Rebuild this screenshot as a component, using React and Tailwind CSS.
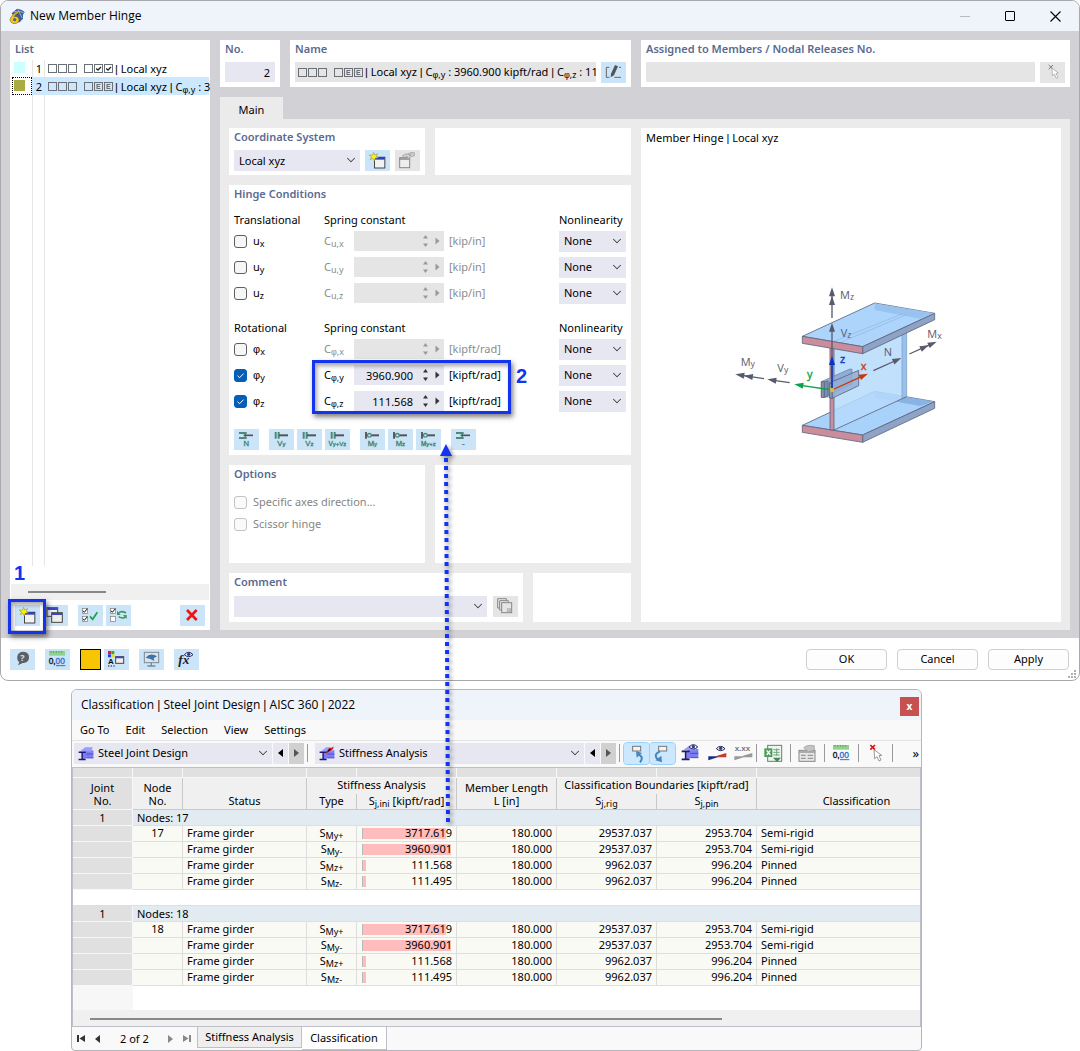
import { ChevronDown } from 'lucide-react';

// ---------- small helpers ----------

const Sub = ({ children }) => (
  <span className="relative top-[2px] text-[9px] leading-none">{children}</span>
);

const Phi = () => <span className="font-['Liberation_Sans',sans-serif]">φ</span>;

const Bar = () => <span className="font-['Liberation_Sans',sans-serif]">|</span>;

// one little square of the hinge code, e.g. □ ☑ E
const CodeBox = ({ mark }) => (
  <svg className="w-[9px] h-[9px] shrink-0" viewBox="0 0 9 9" fill="none" stroke="currentColor">
    <rect x="0.5" y="0.5" width="8" height="8" strokeWidth="1" />
    {mark === 'v' && <path d="M2.2 4.4 L4 6 L7 3" stroke="#222" strokeWidth="1.3" />}
    {mark === 'E' && <path d="M6.4 2.5 H3 V6.5 H6.4 M3 4.5 H6" strokeWidth="1.1" />}
  </svg>
);

const HingeCode = ({ marks }) => (
  <span className="flex gap-px shrink-0 items-center text-[#6b6f76]">
    <CodeBox />
    <CodeBox />
    <CodeBox />
    <span className="w-[5px]" />
    {marks.map((m, i) => (
      <CodeBox key={i} mark={m} />
    ))}
  </span>
);

const Panel = ({ title, className = '', children }) => (
  <section className={`bg-white px-[5px] ${className}`}>
    {title && <h2 className="font-semibold text-[#5a6a91] leading-[18px] h-[22px]">{title}</h2>}
    {children}
  </section>
);

const IconButton = ({ label, disabled, children }) => (
  <button
    type="button"
    aria-label={label}
    disabled={disabled}
    className={`w-[25px] h-[21px] shrink-0 ${disabled ? 'bg-[#e5e5e5]' : 'bg-[#cce4f7]'}`}
  >
    <svg className="w-full h-full" viewBox="0 0 75 63" fill="none">
      {children}
    </svg>
  </button>
);

const Dropdown = ({ label, value, className = '', selectClass = 'pl-[5px]' }) => (
  <div className={`relative h-[21px] ${className}`}>
    <select
      aria-label={label}
      defaultValue={value}
      className={`appearance-none w-full h-full bg-[#e7e7f2] pr-5 outline-none ${selectClass}`}
    >
      <option>{value}</option>
    </select>
    <ChevronDown size={14} strokeWidth={1.8} className="absolute right-[2px] top-[3px] text-[#444] pointer-events-none" />
  </div>
);

const CheckBox = ({ id, checked, disabled }) => (
  <span className="relative w-[13px] h-[13px] shrink-0">
    <input
      id={id}
      type="checkbox"
      defaultChecked={checked}
      disabled={disabled}
      className="appearance-none block w-[13px] h-[13px] rounded-[3px] border border-[#5f5f5f] bg-[#f6f6f6] checked:bg-[#005fb8] checked:border-[#005fb8] disabled:border-[#c3c3c3] disabled:bg-[#fafafa]"
    />
    {checked && (
      <svg className="absolute inset-0 pointer-events-none" viewBox="0 0 13 13" fill="none">
        <path d="M3.5 6.7 L5.6 8.7 L9.6 4.6" stroke="#fff" strokeWidth="1" />
      </svg>
    )}
  </span>
);

// ---------- icon drawings (75 x 63 units = one button) ----------

const Star = () => (
  <path d="M26 7 L29 15 L38 11 L33 19 L40 24 L31 24 L28 33 L24 25 L15 29 L20 21 L12 15 L22 16 Z" fill="#fbf305" stroke="#8a8a3c" strokeWidth="1.5" />
);

const NewWindowIcon = () => (
  <>
    <rect x="28.500" y="23" width="31" height="31" fill="#f2f2f2" stroke="#444" strokeWidth="3" />
    <rect x="30" y="21" width="29" height="8" fill="#2f3fd0" />
    <path d="M27 21.500 H61" stroke="#444" strokeWidth="2" />
    <Star />
  </>
);

const CopyWindowIcon = () => (
  <>
    <rect x="12" y="8" width="32" height="26" fill="#f2f2f2" stroke="#444" strokeWidth="3" />
    <rect x="13" y="9" width="30" height="6" fill="#3947c8" />
    <rect x="26" y="23" width="32" height="29" fill="#eee" stroke="#444" strokeWidth="3" />
    <rect x="27" y="24" width="30" height="6" fill="#3947c8" />
  </>
);

const TickSquare = ({ y, on }) => (
  <g>
    <rect x="13" y={y} width="15" height="15" fill="#fff" stroke="#777" strokeWidth="2" />
    {on && <path d={`M15 ${y + 7} l4 5 l9 -11`} stroke="#111" strokeWidth="3" />}
  </g>
);

const EditIcon = () => (
  <>
    <path d="M25 16 H16 V46 H25" stroke="#666" strokeWidth="3" />
    <path d="M40 46 H60 M54 16 H60" stroke="#666" strokeWidth="3" />
    <path d="M29 46 L30 35 L42 9 L51 13 L39 40 Z" fill="#555" />
  </>
);

const HandWindowIcon = () => (
  <>
    <rect x="14" y="23" width="30" height="30" fill="#eee" stroke="#888" strokeWidth="3" />
    <path d="M14 27 H44" stroke="#888" strokeWidth="4" />
    <path d="M22 18 Q30 9 38 12 Q48 5 58 8 V18 Q52 18 46 21 L40 27 L36 25 L38 20 L28 22 Z" fill="#cfcfcf" stroke="#999" strokeWidth="2" />
    <path d="M38 12 L48 16 M42 18 L50 12" stroke="#999" strokeWidth="2" />
  </>
);

const PickIcon = () => (
  <>
    <path d="M26 9 L39 22 M39 9 L26 22" stroke="#777" strokeWidth="3" />
    <path d="M36 18 L37 41 L43 36 L49 49 L54 46 L48 34 L55 33 Z" fill="#fff" stroke="#999" strokeWidth="2" />
  </>
);

// hinge presets
const PresetIcon = ({ kind, text }) => (
  <>
    {kind === 'n' && (
      <>
        <path d="M15 12 H38 M15 27 H38" stroke="#4c8a7c" strokeWidth="6" />
        <path d="M34 9 V29" stroke="#4c8a7c" strokeWidth="4" />
        <path d="M29 19 H57" stroke="#555" strokeWidth="5" />
      </>
    )}
    {kind === 'v' && (
      <>
        <path d="M20 9 V29 M29 9 V29" stroke="#4c8a7c" strokeWidth="6" />
        <path d="M30 19 H57" stroke="#555" strokeWidth="6" />
      </>
    )}
    {kind === 'm' && (
      <>
        <path d="M18 9 V29" stroke="#444" strokeWidth="5" />
        <path d="M18 19 H57" stroke="#555" strokeWidth="6" />
        <circle cx="28" cy="19" r="5.500" fill="#cce4f7" stroke="#4c8a7c" strokeWidth="4" />
      </>
    )}
    <text x="37" y="50" textAnchor="middle" fontFamily="Liberation Sans" fontSize={text.length > 2 ? 19 : 23} fill="#3f8576" stroke="#3f8576" strokeWidth="1">
      {text[0]}
      <tspan fontSize="18" dy="2">{text.slice(1)}</tspan>
    </text>
  </>
);

const UnitsIcon = () => (
  <>
    <rect x="12" y="6" width="48" height="14" fill="#8fd28b" />
    <path d="M18 6 v5 M26 6 v5 M34 6 v5 M42 6 v5 M50 6 v5" stroke="#2c8c3c" strokeWidth="2" />
    <text x="11" y="45" fontFamily="Liberation Sans" fontSize="25" fill="#111" stroke="#111" strokeWidth="1">
      0,<tspan fill="#2c6fd0" stroke="#2c6fd0">00</tspan>
    </text>
    <path d="M33 50 H61" stroke="#2c6fd0" strokeWidth="3" />
  </>
);

const Eye = ({ x, y }) => (
  <g transform={`translate(${x} ${y})`}>
    <path d="M0 8 Q13 -6 26 8 Q13 20 0 8 Z" fill="#fff" stroke="#1b2352" strokeWidth="3" />
    <circle cx="13" cy="7" r="5" fill="#27408f" />
  </g>
);

const BeamMini = ({ children }) => (
  <>
    <path d="M22 26 L34 18 H58 V44 H34 L22 50 Z" fill="#7d7df2" />
    <path d="M30 8 H56 L50 22 H12 Z" fill="#9c9cff" />
    <path d="M34 31 H58 M34 44 H58" stroke="#4a4ad0" strokeWidth="3" />
    <path d="M8 25 H32 M20 25 V48 M8 49 H32" stroke="#1a1a75" strokeWidth="5" />
    {children}
  </>
);

// ---------- dialog parts ----------

const Annotation = ({ className }) => (
  <div className={`absolute border-[3px] border-[#1433ee] shadow-[2px_3px_5px_rgba(0,0,0,0.5),inset_2px_3px_4px_rgba(0,0,0,0.35)] pointer-events-none ${className}`} />
);

const Spinner = () => (
  <svg className="absolute right-0 top-0 w-[23px] h-5" viewBox="0 0 23 20" fill="currentColor">
    <path d="M4.500 4 L7 7.500 H2 Z M4.500 16 L7 12.500 H2 Z M14.500 6.500 L18.500 10 L14.500 13.500 Z" />
  </svg>
);

const HingeRow = ({ base, axis, value, unit }) => {
  const on = Boolean(value);
  const id = `${base}-${axis}`;
  const symbol = base === 'φ' ? <Phi /> : base;
  return (
    <div className="flex items-center h-[26px]">
      <div className="flex items-center w-[90px] gap-[6px]">
        <CheckBox id={id} checked={on} />
        <label htmlFor={id}>
          {symbol}<Sub>{axis}</Sub>
        </label>
      </div>
      <label htmlFor={`${id}-c`} className={`w-[30px] ${on ? '' : 'text-[#8b8b8b]'}`}>
        C<Sub>{symbol},{axis}</Sub>
      </label>
      <div className={`relative w-[90px] h-5 ${on ? 'bg-[#e7e7f2] text-[#333]' : 'bg-[#e5e5e5] text-[#999]'}`}>
        <input
          id={`${id}-c`}
          defaultValue={value}
          disabled={!on}
          className="w-full h-full bg-transparent text-right pr-[31px] text-black outline-none"
        />
        <Spinner />
      </div>
      <span className={`ml-[5px] flex-1 ${on ? '' : 'text-[#8b8b8b]'}`}>{unit}</span>
      <Dropdown label={`Nonlinearity ${id}`} value="None" className="w-[67px]" />
    </div>
  );
};

const HingeHeader = ({ title }) => (
  <div className="flex items-center h-4">
    <span className="w-[90px]">{title}</span>
    <span className="flex-1">Spring constant</span>
    <span className="w-[67px]">Nonlinearity</span>
  </div>
);

const Arrow = ({ x1, y1, x2, y2, color = '#5a5a6e', double }) => {
  const len = Math.hypot(x2 - x1, y2 - y1);
  const deg = (Math.atan2(y2 - y1, x2 - x1) * 180) / Math.PI;
  return (
    <g transform={`translate(${x1} ${y1}) rotate(${deg})`} fill={color}>
      <path d={`M0 0 H${len - 20}`} stroke={color} strokeWidth="4" />
      <path d={`M${len} 0 l-27 -9 v18 Z`} />
      {double && <path d={`M${len - 26} 0 l-27 -9 v18 Z`} />}
    </g>
  );
};

const BeamDrawing = () => (
  <svg className="w-60 h-[180px]" viewBox="0 0 720 540" fill="none" fontFamily="Open Sans, sans-serif" fontSize="33">
    <g stroke="#5d6580" strokeWidth="2.500" strokeLinejoin="round">
      {/* bottom flange */}
      <path d="M247 436 L464 334 L644 365 L428 465 Z" fill="#a9d2fb" />
      <path d="M464 334 V353 L600 378 L644 365 Z" fill="#88b3e2" stroke="none" />
      <path d="M428 465 L644 365 V385 L428 487 Z" fill="#8ea3c5" />
      <path d="M247 436 L428 465 V487 L247 457 Z" fill="#c98d9c" />
      {/* web */}
      <path d="M342 208 L546 106 L560 102 V350 L342 449 Z" fill="#b6dafb" fillOpacity="0.850" stroke="none" />
      <path d="M546 110 L560 104 V350 L546 356 Z" fill="#94c1ee" stroke="#8aa4c8" />
      <path d="M342 450 L560 350" />
      <path d="M330 203 H342 V450 H330 Z" fill="#c98d9c" />
      {/* top flange */}
      <path d="M247 169 L464 69 L644 100 L428 200 Z" fill="#add5fc" />
      <path d="M464 70 V90 L600 116 L644 100 Z" fill="#98c3ee" stroke="none" />
      <path d="M342 184 L546 102 M360 188 L560 104" stroke="#8cb5df" strokeWidth="2" />
      <path d="M428 200 L644 100 V119 L428 221 Z" fill="#8ea3c5" />
      <path d="M247 169 L428 200 V221 L247 190 Z" fill="#c98d9c" />
      {/* hinge plates */}
      <path d="M304 305 L390 267 L396 268 V312 L313 352 L304 352 Z" fill="#7d9cc8" fillOpacity="0.750" stroke="#7486a6" />
      <path d="M304 305 H313 V352 H304 Z" fill="#8c93a8" />
      <path d="M313 306 L324 302 V350 L313 352 Z" fill="#7890b8" />
      <path d="M328 309 L416 271 V317 L336 355 L328 353 Z" fill="#93aed4" fillOpacity="0.850" />
      <path d="M328 309 L337 311 V355 L328 353 Z" fill="#8c93a8" />
    </g>
    <Arrow x1={336} y1={114} x2={336} y2={22} double />
    <Arrow x1={336} y1={330} x2={336} y2={128} />
    <Arrow x1={336} y1={330} x2={336} y2={228} color="#0433c8" />
    <Arrow x1={336} y1={330} x2={223} y2={313} color="#0aa04c" />
    <Arrow x1={336} y1={330} x2={444} y2={281} color="#c8370a" />
    <Arrow x1={460} y1={272} x2={544} y2={234} />
    <Arrow x1={568} y1={222} x2={650} y2={185} double />
    <Arrow x1={209} y1={308} x2={142} y2={298} />
    <Arrow x1={132} y1={296} x2={46} y2={283} double />
    <circle cx="336" cy="330" r="7" fill="#c6bf4e" />
    <g fill="#5a5a6e">
      <text x="360" y="58">M<tspan fontSize="26" dy="3">z</tspan></text>
      <text x="362" y="171">V<tspan fontSize="26" dy="3">z</tspan></text>
      <text x="622" y="175">M<tspan fontSize="26" dy="3">x</tspan></text>
      <text x="491" y="228">N</text>
      <text x="62" y="257">M<tspan fontSize="26" dy="3">y</tspan></text>
      <text x="172" y="277">V<tspan fontSize="26" dy="3">y</tspan></text>
    </g>
    <text x="360" y="248" fill="#0433c8" stroke="#0433c8">z</text>
    <text x="422" y="269" fill="#c8370a" stroke="#c8370a">x</text>
    <text x="261" y="293" fill="#0aa04c" stroke="#0aa04c">y</text>
  </svg>
);

const ListPanel = () => (
  <section className="relative bg-white w-[200px] shrink-0 flex flex-col">
    <h2 className="font-semibold text-[#5a6a91] leading-[18px] h-5 px-[5px]">List</h2>
    <div className="flex-1 flex flex-col pl-[2px] pr-px bg-[linear-gradient(#e6e6e6,#e6e6e6),linear-gradient(#e6e6e6,#e6e6e6)] bg-[length:1px_100%] bg-no-repeat bg-[position:22px_0,34px_0]">
      <div className="flex items-center h-[17px]">
        <span className="w-5 shrink-0 pl-[2px] h-full pt-[2px]"><span className="block size-[11px] bg-[#ccffff]" /></span>
        <span className="w-[10px] shrink-0 text-right">1</span>
        <span className="flex items-center gap-[2px] ml-[6px] whitespace-nowrap">
          <HingeCode marks={['', 'v', 'v']} />
          <span><Bar /> Local xyz</span>
        </span>
      </div>
      <div className="flex items-center h-[18px] bg-[#cce8ff]">
        <span className="w-5 shrink-0 pl-px pt-[2px] h-full bg-white border border-dotted border-black"><span className="block size-[11px] bg-[#a9ac40]" /></span>
        <span className="w-[10px] shrink-0 text-right pt-px">2</span>
        <span className="flex items-center gap-[2px] ml-[6px] pt-px whitespace-nowrap">
          <HingeCode marks={['', 'E', 'E']} />
          <span><Bar /> Local xyz <Bar /> C<Sub><Phi />,y</Sub> : 3</span>
        </span>
      </div>
    </div>
    <span className="pl-1 h-[18px] text-xl leading-[14px] font-bold text-[#1433ee] font-['Liberation_Sans',sans-serif]">1</span>
    <div className="h-4 mx-px bg-[#f0f0f0] pt-[7px] pl-[17px]">
      <div className="w-[78px] h-[2px] bg-[#888]" />
    </div>
    <div className="flex h-[30px] pt-[5px] px-[5px]">
      <IconButton label="New"><NewWindowIcon /></IconButton>
      <span className="w-[3px]" />
      <IconButton label="Copy"><CopyWindowIcon /></IconButton>
      <span className="w-[10px]" />
      <IconButton label="Select all">
        <TickSquare y={10} on />
        <TickSquare y={34} on />
        <path d="M36 34 L44 43 L58 22" stroke="#16a34a" strokeWidth="5" />
      </IconButton>
      <span className="w-[3px]" />
      <IconButton label="Invert selection">
        <TickSquare y={10} on />
        <TickSquare y={34} />
        <path d="M38 24 Q46 16 60 24 M60 35 Q50 43 38 35" stroke="#3a9a5c" strokeWidth="5" />
        <path d="M33 17 V30 H44 Z M62 42 V30 H51 Z" fill="#3a9a5c" />
      </IconButton>
      <span className="flex-1" />
      <IconButton label="Delete">
        <path d="M21 15 L50 45 M50 15 L21 45" stroke="#f01414" strokeWidth="8" />
      </IconButton>
    </div>
    <Annotation className="left-[-2px] bottom-[-4px] w-[38px] h-[35px]" />
  </section>
);

const presets = [
  ['n', 'N', ''],
  ['v', 'Vy', 'ml-[10px]'],
  ['v', 'Vz', 'ml-[3px]'],
  ['v', 'Vy+Vz', 'ml-[3px]'],
  ['m', 'My', 'ml-[10px]'],
  ['m', 'Mz', 'ml-[3px]'],
  ['m', 'My+z', 'ml-[3px]'],
  ['n', '-', 'ml-[10px]'],
];

const MainTab = () => (
  <div className="flex-1 flex gap-[10px] bg-[#ebebeb] p-[9px] pb-2">
    <div className="w-[402px] shrink-0 flex flex-col gap-[10px]">
      <div className="grid grid-cols-2 gap-[10px]">
        <Panel title="Coordinate System" className="h-[47px]">
          <div className="flex gap-[5px]">
            <Dropdown label="Coordinate System" value="Local xyz" className="w-[126px]" />
            <IconButton label="New coordinate system"><NewWindowIcon /></IconButton>
            <IconButton label="Edit coordinate system" disabled><HandWindowIcon /></IconButton>
          </div>
        </Panel>
        <Panel />
      </div>

      <Panel title="Hinge Conditions" className="pb-[5px]">
        <div className="mt-[5px]">
          <HingeHeader title="Translational" />
          <HingeRow base="u" axis="x" unit="[kip/in]" />
          <HingeRow base="u" axis="y" unit="[kip/in]" />
          <HingeRow base="u" axis="z" unit="[kip/in]" />
        </div>
        <div className="mt-[14px]">
          <HingeHeader title="Rotational" />
          <HingeRow base="φ" axis="x" unit="[kipft/rad]" />
          <div className="relative">
            <HingeRow base="φ" axis="y" value="3960.900" unit="[kipft/rad]" />
            <HingeRow base="φ" axis="z" value="111.568" unit="[kipft/rad]" />
            <Annotation className="left-[78px] top-[-2px] w-[199px] h-[54px]" />
            <span className="absolute left-[282px] top-1 text-xl leading-5 font-bold text-[#1433ee] font-['Liberation_Sans',sans-serif]">2</span>
          </div>
        </div>
        <div className="flex mt-[15px]">
          {presets.map(([kind, text, gap]) => (
            <span key={text} className={`flex ${gap}`}>
              <IconButton label={text}><PresetIcon kind={kind} text={text} /></IconButton>
            </span>
          ))}
        </div>
      </Panel>

      <div className="grid grid-cols-2 gap-[10px]">
        <Panel title="Options" className="h-[98px]">
          <div className="mt-1 text-[#858585]">
            <div className="flex items-center gap-[6px] h-[22px]">
              <CheckBox id="axes" disabled />
              <label htmlFor="axes">Specific axes direction...</label>
            </div>
            <div className="flex items-center gap-[6px] h-[22px]">
              <CheckBox id="scissor" disabled />
              <label htmlFor="scissor">Scissor hinge</label>
            </div>
          </div>
        </Panel>
        <Panel />
      </div>

      <div className="flex gap-[10px] flex-1">
        <Panel title="Comment" className="w-[294px] min-h-[49px]">
          <div className="flex gap-[6px] pt-px">
            <Dropdown label="Comment" value="" className="flex-1" />
            <IconButton label="Comment library" disabled>
              <path d="M19 36 H14 V8 H40 V12 M25 42 H20 V14 H46 V18" stroke="#888" strokeWidth="3" />
              <rect x="26" y="20" width="30" height="30" stroke="#888" strokeWidth="3" />
              <path d="M43 38 H53 V47 H43 Z M45 42 L48 45 L52 39" stroke="#999" strokeWidth="2" />
            </IconButton>
          </div>
        </Panel>
        <Panel className="flex-1" />
      </div>
    </div>

    <section className="bg-white flex-1 flex flex-col px-[5px]">
      <h2 className="leading-5">Member Hinge <Bar /> Local xyz</h2>
      <div className="flex-1 flex items-center justify-center pr-[22px] pb-[30px]">
        <BeamDrawing />
      </div>
    </section>
  </div>
);

const HingeDialog = () => (
  <div className="border border-[#a9a9ad] rounded-lg overflow-hidden bg-white">
    <header className="flex items-center h-[30px] bg-[#eff3fa] pl-2 pr-[18px]">
      <svg className="w-4 h-4" viewBox="0 0 48 48">
        <path d="M8 16 L24 2 Q40 4 47 12 L42 20 V32 L30 44 Z" fill="#3d5d96" />
        <path d="M14 12 Q30 6 44 14 M26 4 L40 30" stroke="#9cb6dd" strokeWidth="3" fill="none" />
        <path d="M25 10 Q6 22 3 34 Q4 46 17 47 Q31 45 30 33 Q27 23 15 26 Q19 18 29 14 Z" fill="#f7c71c" stroke="#7d6a1c" strokeWidth="2" />
        <circle cx="17" cy="35" r="5" fill="#4d6594" />
      </svg>
      <h1 className="flex-1 ml-[5px] text-[12px] font-['Open_Sans',sans-serif]">New Member Hinge</h1>
      <button type="button" aria-label="Minimize" className="w-[10px] h-px bg-[#bbb]" />
      <button type="button" aria-label="Maximize" className="ml-[35px] size-[10px] border border-black rounded-[1px]" />
      <button type="button" aria-label="Close" className="ml-[35px] size-[11px]">
        <svg viewBox="0 0 11 11" stroke="#000" strokeWidth="1.100"><path d="M0.500 0.500 L10.500 10.500 M10.500 0.500 L0.500 10.500" /></svg>
      </button>
    </header>

    <main className="flex gap-[10px] bg-[#d1d1d6] pt-[9px] pb-2 px-[9px]">
      <ListPanel />
      <div className="flex-1 flex flex-col min-w-0">
        <div className="flex gap-[10px] h-[47px]">
          <Panel title="No." className="w-[60px]">
            <input aria-label="No." defaultValue="2" className="w-full h-5 bg-[#e7e7f2] text-right pr-[5px]" />
          </Panel>
          <Panel title="Name" className="w-[341px]">
            <div className="flex gap-[5px]">
              <div className="flex-1 min-w-0 h-5 bg-[#e5e5e5] flex items-center gap-[2px] pl-[3px] whitespace-nowrap">
                <HingeCode marks={['', 'E', 'E']} />
                <span>
                  <Bar /> Local xyz <Bar /> C<Sub><Phi />,y</Sub> : 3960.900 kipft/rad <Bar /> C<Sub><Phi />,z</Sub> : 11
                </span>
              </div>
              <IconButton label="Edit name"><EditIcon /></IconButton>
            </div>
          </Panel>
          <Panel title="Assigned to Members / Nodal Releases No." className="flex-1">
            <div className="flex gap-[5px]">
              <input aria-label="Assigned to" disabled className="flex-1 h-5 bg-[#e5e5e5]" />
              <IconButton label="Pick" disabled><PickIcon /></IconButton>
            </div>
          </Panel>
        </div>
        <div className="flex mt-[10px]">
          <button type="button" className="w-[63px] h-[22px] bg-[#ebebeb] pt-[3px]">Main</button>
        </div>
        <MainTab />
      </div>
    </main>

    <footer className="relative flex items-center h-[42px] pl-[9px] pr-[10px]">
      <IconButton label="Help">
        <path d="M38 8 C54 8 58 18 57 27 C56 39 46 42 38 42 L24 49 L28 39 C18 34 19 8 38 8 Z" fill="#5b5f66" />
        <text x="31" y="36" fontSize="27" fontWeight="bold" fill="#cce4f7">?</text>
      </IconButton>
      <span className="w-[10px]" />
      <IconButton label="Units"><UnitsIcon /></IconButton>
      <button type="button" aria-label="Color" className="ml-[10px] size-[21px] bg-[#f7c600] border border-black" />
      <span className="w-[3px]" />
      <IconButton label="Display settings">
        <path d="M12 6 h9 v9 h-9 Z" fill="#e02020" />
        <path d="M22 6 h9 v9 h-9 Z" fill="#20b030" />
        <path d="M12 16 h9 v9 h-9 Z" fill="#2040e0" />
        <path d="M22 16 h9 v9 h-9 Z" fill="#e8d800" />
        <text x="12" y="46" fontFamily="Liberation Sans" fontSize="24" fontWeight="bold" fill="#111">A</text>
        <path d="M12 51 h4 M20 51 h4 M28 51 h4" stroke="#111" strokeWidth="3" />
        <rect x="35" y="23" width="24" height="20" fill="#eee" stroke="#444" strokeWidth="3" />
        <path d="M34 25 H60" stroke="#3947c8" strokeWidth="5" />
      </IconButton>
      <span className="w-[10px]" />
      <IconButton label="View">
        <rect x="16" y="10" width="43" height="31" fill="#d7e4ee" stroke="#7a8894" strokeWidth="3" />
        <path d="M20 26 Q34 10 54 22 L44 28 L46 36 L34 30 Z" fill="#3f73a6" />
        <path d="M37 41 V50 M25 51 H49" stroke="#7a8894" strokeWidth="4" />
      </IconButton>
      <span className="w-[10px]" />
      <IconButton label="Formula">
        <text x="13" y="46" fontFamily="Liberation Serif" fontStyle="italic" fontWeight="bold" fontSize="40" fill="#222">fx</text>
        <Eye x={31} y={9} />
      </IconButton>
      <span className="flex-1" />
      <div className="flex gap-[10px]">
        {['OK', 'Cancel', 'Apply'].map((t) => (
          <button key={t} type="button" className="w-[81px] h-[21px] rounded-[4px] border border-[#cfcfcf] bg-[#fdfdfd]">
            {t}
          </button>
        ))}
      </div>
      {/* resize grip */}
      <svg className="absolute right-[3px] bottom-[2px] w-2 h-2" viewBox="0 0 8 8" fill="#b0b0b0">
        <path d="M6 0 h2 v2 h-2 Z M6 3 h2 v2 h-2 Z M6 6 h2 v2 h-2 Z M3 3 h2 v2 h-2 Z M3 6 h2 v2 h-2 Z M0 6 h2 v2 h-2 Z" />
      </svg>
    </footer>
  </div>
);

// ---------- classification window ----------

const groups = [{ joint: 1, node: 17 }, { joint: 1, node: 18 }];

const results = [
  { type: 'My+', s: '3717.619', rig: '29537.037', pin: '2953.704', cls: 'Semi-rigid' },
  { type: 'My-', s: '3960.901', rig: '29537.037', pin: '2953.704', cls: 'Semi-rigid' },
  { type: 'Mz+', s: '111.568', rig: '9962.037', pin: '996.204', cls: 'Pinned' },
  { type: 'Mz-', s: '111.495', rig: '9962.037', pin: '996.204', cls: 'Pinned' },
];

const maxS = 3960.901;
const cell = 'border-r border-b border-[#dedede] bg-[#fafaf5] px-1 h-4 align-top leading-[14px] whitespace-nowrap';
const head = 'border-r border-[#c9c9cc] bg-[#f0f0f0] font-normal px-0';
const joint = 'border-b border-r border-[#f7f7f7] bg-[#e0e0e0] h-4';

const ResultTable = () => (
  <table className="table-fixed w-[884px] border-separate border-spacing-0 leading-[13px]">
    <colgroup>
      <col className="w-[60px]" />
      <col className="w-[50px]" />
      <col className="w-[124px]" />
      <col className="w-[50px]" />
      <col className="w-[100px]" />
      <col className="w-[100px]" />
      <col className="w-[100px]" />
      <col className="w-[100px]" />
      <col className="w-[200px]" />
    </colgroup>
    <thead>
      <tr>
        {Array.from({ length: 9 }, (_, i) => (
          <td key={i} className="h-[10px] bg-[#e0e0e0] border-r border-b border-[#f7f7f7]" />
        ))}
      </tr>
      <tr>
        <th rowSpan={2} className="bg-[#e0e0e0] font-normal align-bottom pb-[2px] border-r border-b border-[#f7f7f7]">Joint<br />No.</th>
        <th rowSpan={2} className={`${head} border-b align-bottom pb-[2px]`}>Node<br />No.</th>
        <th rowSpan={2} className={`${head} border-b align-bottom pb-[2px]`}>Status</th>
        <th colSpan={2} className={`${head} h-4 align-top`}>Stiffness Analysis</th>
        <th rowSpan={2} className={`${head} border-b align-bottom pb-[2px]`}>Member Length<br />L [in]</th>
        <th colSpan={2} className={`${head} h-4 align-top`}>Classification Boundaries [kipft/rad]</th>
        <th rowSpan={2} className={`${head} border-b align-bottom pb-[2px]`}>Classification</th>
      </tr>
      <tr>
        <th className={`${head} border-b h-4 align-bottom pb-[2px]`}>Type</th>
        <th className={`${head} border-b align-bottom pb-[2px]`}>S<Sub>j,ini</Sub> [kipft/rad]</th>
        <th className={`${head} border-b align-bottom pb-[2px]`}>S<Sub>j,rig</Sub></th>
        <th className={`${head} border-b align-bottom pb-[2px]`}>S<Sub>j,pin</Sub></th>
      </tr>
    </thead>
    {groups.map((g, gi) => (
      <tbody key={g.node}>
        {gi > 0 && (
          <tr><td colSpan={9} className="h-4 bg-white border-b border-[#dedede]" /></tr>
        )}
        <tr>
          <td className={`${joint} text-center`}>{g.joint}</td>
          <td colSpan={8} className="h-4 bg-[#e2ebf1] border-b border-[#dedede] px-1">Nodes: {g.node}</td>
        </tr>
        {results.map((r, i) => (
          <tr key={r.type}>
            <td className={joint} />
            <td className={`${cell} text-center`}>{i === 0 ? g.node : ''}</td>
            <td className={cell}>Frame girder</td>
            <td className={`${cell} text-center`}>S<Sub>{r.type}</Sub></td>
            <td className={cell}>
              <div className="relative border-l border-[#b9b9b9] ml-px mt-[2px] h-[11px] leading-[10px] text-right">
                <div
                  className="absolute inset-y-0 left-0 bg-[#ffbcbc]"
                  style={{ width: `${Math.max(3, (Number(r.s) / maxS) * 99)}%` }}
                />
                <span className="relative">{r.s}</span>
              </div>
            </td>
            <td className={`${cell} text-right`}>180.000</td>
            <td className={`${cell} text-right`}>{r.rig}</td>
            <td className={`${cell} text-right`}>{r.pin}</td>
            <td className={cell}>{r.cls}</td>
          </tr>
        ))}
      </tbody>
    ))}
    <tbody>
      <tr><td className="h-6 bg-[#f7f7f7]" /></tr>
    </tbody>
  </table>
);

const NavArrow = ({ dir, className = '' }) => (
  <button type="button" aria-label={dir} className={`w-[15px] h-[21px] flex items-center justify-center shrink-0 ${className}`}>
    <svg className="w-[5px] h-[8px]" viewBox="0 0 5 8" fill="currentColor">
      <path d={dir === 'previous' ? 'M5 0 V8 L0 4 Z' : 'M0 0 V8 L5 4 Z'} />
    </svg>
  </button>
);

const ToolIcon = ({ label, className = '', children }) => (
  <button type="button" aria-label={label} className={`w-[25px] h-[21px] shrink-0 ${className}`}>
    <svg className="w-full h-full" viewBox="0 0 75 63" fill="none">{children}</svg>
  </button>
);

const Divider = () => <span className="w-px h-[18px] bg-[#9a9a9a] shrink-0" />;

const Combo = ({ label, value, className, red }) => (
  <div className={`relative ${className}`}>
    <Dropdown label={label} value={value} selectClass="pl-6" />
    <svg className="absolute left-1 top-[3px] w-4 h-[15px] pointer-events-none" viewBox="6 4 54 50">
      <BeamMini>{red && <path d="M30 28 L40 12 H54 M42 22 L54 6" stroke="#e02020" strokeWidth="3" />}</BeamMini>
    </svg>
  </div>
);

const ClassificationWindow = () => (
  <div className="mt-2 ml-[71px] mr-[158px] border border-[#b5b5bb] rounded-t-md rounded-b-sm bg-[#f9f9f9] overflow-hidden">
    <header className="flex items-center h-[30px] bg-[#eff3fa] pl-[9px] pr-[2px]">
      <h1 className="flex-1 text-[12px] font-['Open_Sans',sans-serif]">
        Classification <Bar /> Steel Joint Design <Bar /> AISC 360 <Bar /> 2022
      </h1>
      <button type="button" aria-label="Close" className="w-[19px] h-[19px] mt-[2px] bg-[#c75050] text-white text-[10px] leading-[17px] font-bold">x</button>
    </header>
    <nav className="flex items-center h-5 pl-2 gap-4">
      {['Go To', 'Edit', 'Selection', 'View', 'Settings'].map((m) => (
        <button key={m} type="button">{m}</button>
      ))}
    </nav>

    <div className="flex items-center h-[27px] pl-[2px] pb-[2px] border-t border-[#e4e4e4]">
      <Combo label="Add-on" value="Steel Joint Design" className="w-[198px]" />
      <NavArrow dir="previous" className="ml-px bg-[#e7e7f2]" />
      <NavArrow dir="next" className="ml-px mr-[3px] bg-[#d0d0d0] text-[#555]" />
      <Divider />
      <Combo label="Table group" value="Stiffness Analysis" className="w-[269px] ml-[7px]" red />
      <NavArrow dir="previous" className="ml-px bg-[#e7e7f2]" />
      <NavArrow dir="next" className="ml-px mr-[3px] bg-[#d0d0d0] text-[#555]" />
      <Divider />
      <ToolIcon label="Select in graphics" className="ml-1 bg-[#cce8ff] rounded-[3px] outline outline-[#99d1ff]">
        <rect x="26" y="10" width="24" height="14" fill="#f4f4f4" stroke="#777" strokeWidth="3" />
        <path d="M40 34 Q62 40 48 58" stroke="#4a87b8" strokeWidth="6" />
        <path d="M36 24 L38 44 L54 30 Z" fill="#4a87b8" />
      </ToolIcon>
      <ToolIcon label="Select from graphics" className="ml-px bg-[#cce8ff] rounded-[3px] outline outline-[#99d1ff]">
        <rect x="26" y="10" width="24" height="14" fill="#f4f4f4" stroke="#777" strokeWidth="3" />
        <path d="M30 25 Q8 34 24 50" stroke="#4a87b8" strokeWidth="6" />
        <path d="M16 52 L34 38 L36 58 Z" fill="#4a87b8" />
      </ToolIcon>
      <ToolIcon label="Joint view" className="ml-1"><BeamMini><Eye x={30} y={4} /></BeamMini></ToolIcon>
      <ToolIcon label="Result view" className="ml-px">
        <path d="M10 40 H38 V43 L10 52 Z" fill="#1c2d80" />
        <path d="M36 38 L64 30 V43 H36 Z" fill="#c73a2a" />
        <Eye x={34} y={9} />
      </ToolIcon>
      <ToolIcon label="Values" className="ml-px">
        <text x="11" y="24" fontFamily="Liberation Sans" fontSize="24" fontWeight="bold" fill="#777">x.xx</text>
        <path d="M10 40 H38 V43 L10 52 Z M36 38 L64 30 V43 H36 Z" fill="#999" />
      </ToolIcon>
      <Divider />
      <ToolIcon label="Export to Excel" className="mx-[4px]">
        <rect x="20" y="7" width="42" height="48" fill="#eef5ee" stroke="#777" strokeWidth="3" />
        <rect x="10" y="16" width="24" height="26" fill="#4f9a5c" />
        <path d="M17 22 L28 36 M28 22 L17 36" stroke="#fff" strokeWidth="4" />
        <path d="M37 20 H56 M37 28 H56 M37 36 H56 M47 16 V38" stroke="#6aa877" strokeWidth="3" />
        <path d="M36 44 H60 L48 57 Z" fill="#3f8a4f" />
      </ToolIcon>
      <Divider />
      <ToolIcon label="Edit object" className="mx-[4px]">
        <rect x="12" y="22" width="48" height="33" fill="#e6e6e6" stroke="#888" strokeWidth="3" />
        <path d="M12 27 H60 M18 37 H32 M18 46 H32 M38 37 H54 M38 46 H54" stroke="#999" strokeWidth="4" />
        <path d="M26 14 Q36 4 58 8 V22 L40 26 Z" fill="#c4c4c4" stroke="#999" strokeWidth="2" />
      </ToolIcon>
      <Divider />
      <ToolIcon label="Units" className="mx-[4px]"><UnitsIcon /></ToolIcon>
      <Divider />
      <ToolIcon label="Clear selection" className="mx-[4px]">
        <path d="M22 6 L36 20 M36 6 L22 20" stroke="#e01010" strokeWidth="5" />
        <path d="M33 20 L35 47 L42 41 L48 54 L54 51 L48 38 L56 37 Z" fill="#fff" stroke="#666" strokeWidth="2" />
      </ToolIcon>
      <Divider />
      <button type="button" aria-label="More" className="ml-auto mr-[2px] text-[13px]">»</button>
    </div>

    <div className="border-t border-x border-[#bfbfc9] bg-white overflow-hidden">
      <ResultTable />
      <div className="h-4 bg-[#f0f0f0] pt-2 pl-[17px]">
        <div className="w-[632px] max-w-full h-[2px] bg-[#888]" />
      </div>
    </div>

    <footer className="flex h-6 border-t border-[#bfbfc9] pl-[5px]">
      <div className="flex items-center w-[120px] text-[#333]">
        <button type="button" aria-label="First"><svg className="w-2 h-[7px]" viewBox="0 0 8 7" fill="currentColor"><path d="M0 0 H2 V7 H0 Z M8 0 V7 L2.500 3.500 Z" /></svg></button>
        <NavArrow dir="previous" className="ml-[5px]" />
        <span className="ml-[15px] text-black">2 of 2</span>
        <NavArrow dir="next" className="ml-[14px] text-[#888]" />
        <button type="button" aria-label="Last" className="ml-[5px] text-[#888]"><svg className="w-2 h-[7px]" viewBox="0 0 8 7" fill="currentColor"><path d="M6 0 H8 V7 H6 Z M0 0 V7 L5.500 3.500 Z" /></svg></button>
      </div>
      <button type="button" className="h-[21px] w-[105px] bg-[#eee] border border-t-0 border-[#bfbfc9]">Stiffness Analysis</button>
      <button type="button" className="h-[23px] w-[85px] bg-white border-r border-b border-[#bfbfc9]">Classification</button>
    </footer>
  </div>
);

export default function App() {
  return (
    <div className="relative bg-white text-black text-[11px] leading-4 font-['Noto_Sans','Open_Sans',sans-serif]">
      <HingeDialog />
      <ClassificationWindow />
      {/* arrow from the stiffness column up to the spring constants */}
      <svg className="absolute left-[436px] top-[440px] w-6 h-[390px] pointer-events-none drop-shadow-[2px_2px_2px_rgba(0,0,0,0.45)]" viewBox="0 0 24 390">
        <path d="M10 4 L16 16 H4 Z" fill="#1433ee" />
        <path d="M10 18 L12 382" stroke="#1433ee" strokeWidth="4" strokeDasharray="4 4" />
      </svg>
    </div>
  );
}
